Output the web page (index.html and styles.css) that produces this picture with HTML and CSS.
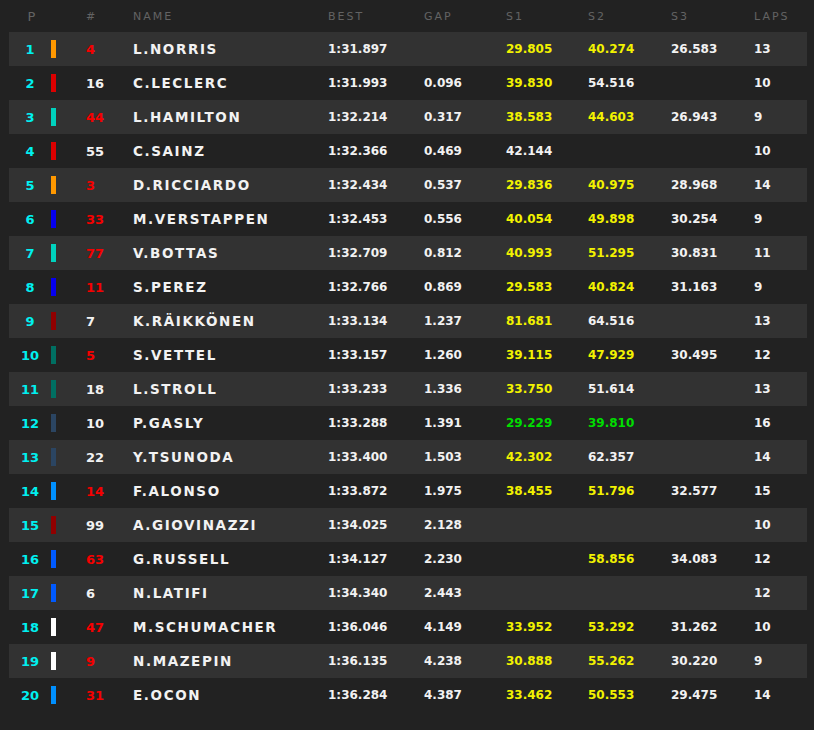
FILE: index.html
```html
<!DOCTYPE html>
<html>
<head>
<meta charset="utf-8">
<link rel="stylesheet" href="styles.css">
</head>
<body>
<div class="board">
  <div class="row head">
    <div class="c-pos">P</div><div class="c-bar"></div><div class="c-num">#</div><div class="c-name">NAME</div><div>BEST</div><div>GAP</div><div>S1</div><div>S2</div><div>S3</div><div>LAPS</div>
  </div>
  <div class="row"><div class="c-pos">1</div><div class="c-bar"><span class="bar mcl"></span></div><div class="c-num red">4</div><div class="c-name">L.NORRIS</div><div>1:31.897</div><div></div><div class="y">29.805</div><div class="y">40.274</div><div>26.583</div><div>13</div></div>
  <div class="row"><div class="c-pos">2</div><div class="c-bar"><span class="bar fer"></span></div><div class="c-num">16</div><div class="c-name">C.LECLERC</div><div>1:31.993</div><div>0.096</div><div class="y">39.830</div><div>54.516</div><div></div><div>10</div></div>
  <div class="row"><div class="c-pos">3</div><div class="c-bar"><span class="bar mer"></span></div><div class="c-num red">44</div><div class="c-name">L.HAMILTON</div><div>1:32.214</div><div>0.317</div><div class="y">38.583</div><div class="y">44.603</div><div>26.943</div><div>9</div></div>
  <div class="row"><div class="c-pos">4</div><div class="c-bar"><span class="bar fer"></span></div><div class="c-num">55</div><div class="c-name">C.SAINZ</div><div>1:32.366</div><div>0.469</div><div>42.144</div><div></div><div></div><div>10</div></div>
  <div class="row"><div class="c-pos">5</div><div class="c-bar"><span class="bar mcl"></span></div><div class="c-num red">3</div><div class="c-name">D.RICCIARDO</div><div>1:32.434</div><div>0.537</div><div class="y">29.836</div><div class="y">40.975</div><div>28.968</div><div>14</div></div>
  <div class="row"><div class="c-pos">6</div><div class="c-bar"><span class="bar rbr"></span></div><div class="c-num red">33</div><div class="c-name">M.VERSTAPPEN</div><div>1:32.453</div><div>0.556</div><div class="y">40.054</div><div class="y">49.898</div><div>30.254</div><div>9</div></div>
  <div class="row"><div class="c-pos">7</div><div class="c-bar"><span class="bar mer"></span></div><div class="c-num red">77</div><div class="c-name">V.BOTTAS</div><div>1:32.709</div><div>0.812</div><div class="y">40.993</div><div class="y">51.295</div><div>30.831</div><div>11</div></div>
  <div class="row"><div class="c-pos">8</div><div class="c-bar"><span class="bar rbr"></span></div><div class="c-num red">11</div><div class="c-name">S.PEREZ</div><div>1:32.766</div><div>0.869</div><div class="y">29.583</div><div class="y">40.824</div><div>31.163</div><div>9</div></div>
  <div class="row"><div class="c-pos">9</div><div class="c-bar"><span class="bar alf"></span></div><div class="c-num">7</div><div class="c-name">K.RÄIKKÖNEN</div><div>1:33.134</div><div>1.237</div><div class="y">81.681</div><div>64.516</div><div></div><div>13</div></div>
  <div class="row"><div class="c-pos">10</div><div class="c-bar"><span class="bar ast"></span></div><div class="c-num red">5</div><div class="c-name">S.VETTEL</div><div>1:33.157</div><div>1.260</div><div class="y">39.115</div><div class="y">47.929</div><div>30.495</div><div>12</div></div>
  <div class="row"><div class="c-pos">11</div><div class="c-bar"><span class="bar ast"></span></div><div class="c-num">18</div><div class="c-name">L.STROLL</div><div>1:33.233</div><div>1.336</div><div class="y">33.750</div><div>51.614</div><div></div><div>13</div></div>
  <div class="row"><div class="c-pos">12</div><div class="c-bar"><span class="bar at"></span></div><div class="c-num">10</div><div class="c-name">P.GASLY</div><div>1:33.288</div><div>1.391</div><div class="g">29.229</div><div class="g">39.810</div><div></div><div>16</div></div>
  <div class="row"><div class="c-pos">13</div><div class="c-bar"><span class="bar at"></span></div><div class="c-num">22</div><div class="c-name">Y.TSUNODA</div><div>1:33.400</div><div>1.503</div><div class="y">42.302</div><div>62.357</div><div></div><div>14</div></div>
  <div class="row"><div class="c-pos">14</div><div class="c-bar"><span class="bar alp"></span></div><div class="c-num red">14</div><div class="c-name">F.ALONSO</div><div>1:33.872</div><div>1.975</div><div class="y">38.455</div><div class="y">51.796</div><div>32.577</div><div>15</div></div>
  <div class="row"><div class="c-pos">15</div><div class="c-bar"><span class="bar alf"></span></div><div class="c-num">99</div><div class="c-name">A.GIOVINAZZI</div><div>1:34.025</div><div>2.128</div><div></div><div></div><div></div><div>10</div></div>
  <div class="row"><div class="c-pos">16</div><div class="c-bar"><span class="bar wil"></span></div><div class="c-num red">63</div><div class="c-name">G.RUSSELL</div><div>1:34.127</div><div>2.230</div><div></div><div class="y">58.856</div><div>34.083</div><div>12</div></div>
  <div class="row"><div class="c-pos">17</div><div class="c-bar"><span class="bar wil"></span></div><div class="c-num">6</div><div class="c-name">N.LATIFI</div><div>1:34.340</div><div>2.443</div><div></div><div></div><div></div><div>12</div></div>
  <div class="row"><div class="c-pos">18</div><div class="c-bar"><span class="bar haa"></span></div><div class="c-num red">47</div><div class="c-name">M.SCHUMACHER</div><div>1:36.046</div><div>4.149</div><div class="y">33.952</div><div class="y">53.292</div><div>31.262</div><div>10</div></div>
  <div class="row"><div class="c-pos">19</div><div class="c-bar"><span class="bar haa"></span></div><div class="c-num red">9</div><div class="c-name">N.MAZEPIN</div><div>1:36.135</div><div>4.238</div><div class="y">30.888</div><div class="y">55.262</div><div>30.220</div><div>9</div></div>
  <div class="row"><div class="c-pos">20</div><div class="c-bar"><span class="bar alp"></span></div><div class="c-num red">31</div><div class="c-name">E.OCON</div><div>1:36.284</div><div>4.387</div><div class="y">33.462</div><div class="y">50.553</div><div>29.475</div><div>14</div></div>
</div>
</body>
</html>
```
FILE: styles.css
```css
html, body {
  margin: 0;
  padding: 0;
  background: #222222;
}
body {
  width: 814px;
  height: 730px;
  overflow: hidden;
}
.board {
  padding: 0 7px 0 9px;
  display: flex;
  flex-direction: column;
}
.row {
  display: grid;
  grid-template-columns: 42px 35px 47px 195px 96px 82px 82px 83px 83px 53px;
  height: 34px;
  align-items: center;
  font-family: "DejaVu Sans", sans-serif;
  font-weight: bold;
  font-size: 12px;
  color: #f2f2f2;
}
.row:nth-child(even) {
  background: #323232;
}
.row.head {
  height: 32px;
  padding-top: 1px;
  box-sizing: border-box;
  font-weight: normal;
  font-size: 11px;
  letter-spacing: 2px;
  color: #636363;
}
.row.head .c-pos {
  color: #636363;
  padding-left: 5px;
}
.row > div {
  white-space: nowrap;
}
.c-pos {
  text-align: center;
  color: #00f0f0;
  font-size: 13px;
}
.c-bar {
  display: flex;
  align-items: center;
}
.bar {
  display: block;
  width: 5px;
  height: 18px;
}
.c-num {
  font-size: 13px;
}
.c-name {
  font-size: 13.5px;
  letter-spacing: 1.6px;
}
.row.head .c-name, .row.head .c-num {
  font-size: 11px;
  letter-spacing: 2px;
}
.red { color: #f50000; }
.y { color: #f2f200; }
.g { color: #00dd00; }
.mcl { background: #ff9800; }
.fer { background: #dc0000; }
.mer { background: #00d2be; }
.rbr { background: #0600ef; }
.alf { background: #900000; }
.ast { background: #006f62; }
.at  { background: #2b4562; }
.alp { background: #0090ff; }
.wil { background: #005aff; }
.haa { background: #ffffff; }
```
